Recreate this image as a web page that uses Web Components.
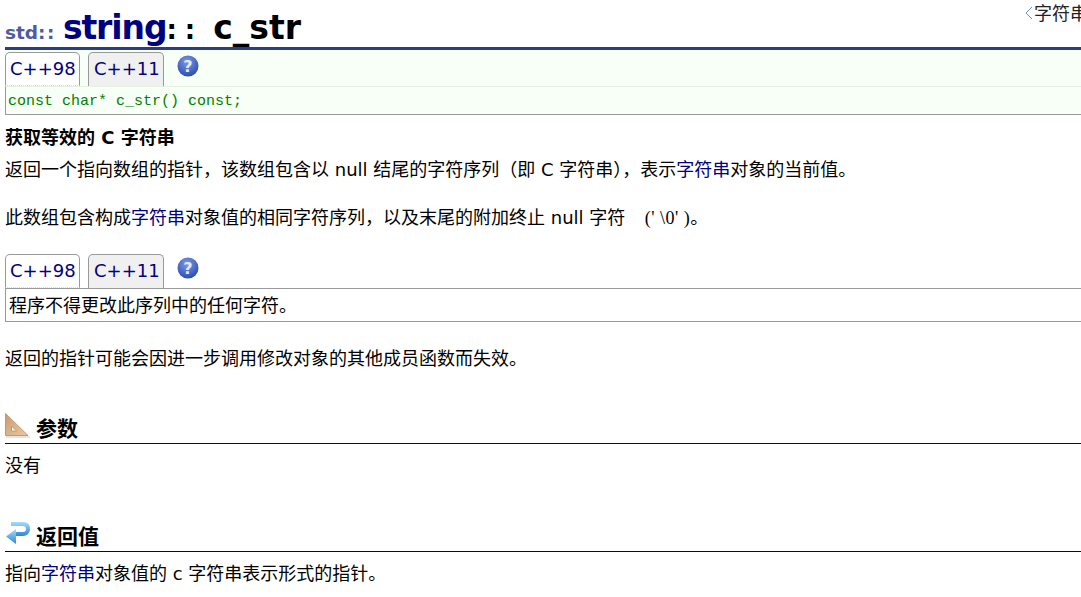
<!DOCTYPE html>
<html lang="zh">
<head>
<meta charset="utf-8">
<title>std::string::c_str</title>
<style>
	html, body { margin: 0; padding: 0; background: #fff; overflow: hidden; }
	body { font: 18px/24px "DejaVu Sans", "Noto Sans CJK SC", sans-serif; color: #000; }
</style>
</head>
<body>
<ref-page>
	<ref-title></ref-title>

	<version-box code>const char* c_str() const;</version-box>

	<ref-para bold style="--top: 11px">获取等效的 C 字符串</ref-para>
	<ref-para style="--top: 8px">返回一个指向数组的指针，该数组包含以 null 结尾的字符序列（即 C 字符串），表示<a>字符串</a>对象的当前值。</ref-para>
	<ref-para style="--top: 24px">此数组包含构成<a>字符串</a>对象值的相同字符序列，以及末尾的附加终止 null 字符 &nbsp;<span style="font-family:'Liberation Serif',serif;margin-left:8px;letter-spacing:.5px">(' \0' )</span>。</ref-para>

	<version-box style="--top: 22px">程序不得更改此序列中的任何字符。</version-box>

	<ref-para style="--top: 25px">返回的指针可能会因进一步调用修改对象的其他成员函数而失效。</ref-para>

	<ref-section icon="ruler" style="--top: 42px">参数</ref-section>
	<ref-para style="--top: 10px">没有</ref-para>

	<ref-section icon="return" style="--top: 43px">返回值</ref-section>
	<ref-para style="--top: 10px">指向<a>字符串</a>对象值的 c 字符串表示形式的指针。</ref-para>
</ref-page>

<script>
	const linkColor = '#000080';

	customElements.define('ref-page', class extends HTMLElement {
		constructor() {
			super();
			this.attachShadow({ mode: 'open' }).innerHTML = `
				<style>
					:host { display: block; height: 597px; padding-left: 5px; overflow: hidden; }
				</style>
				<slot></slot>
			`;
		}
	});

	customElements.define('ref-title', class extends HTMLElement {
		constructor() {
			super();
			this.attachShadow({ mode: 'open' }).innerHTML = `
				<style>
					:host { display: block; position: relative; height: 47px; border-bottom: 3px solid #2a3f80; }
					h1 { display: flex; align-items: baseline; margin: 0; padding-top: 10px; font: bold 33px/36px "DejaVu Sans", sans-serif; white-space: nowrap; }
					.ns { font-size: 18.5px; color: #4f5ba0; margin-right: 7px; }
					.ns b { letter-spacing: 1.5px; }
					.cls { color: #000080; letter-spacing: -1.1px; }
					.sep { letter-spacing: 8px; font-size: 26px; }
					.name { margin-left: 10px; }
					.back { position: absolute; top: 0; right: 0; width: 56px; overflow: hidden; white-space: nowrap; font: 18px/24px "Noto Sans CJK SC", sans-serif; color: #222; }
					.back svg { margin-right: 1px; }
				</style>
				<h1><span class="ns">std<b>::</b></span><span class="cls">string</span><span class="sep">::</span><span class="name">c_str</span></h1>
				<span class="back"><svg width="8" height="14" viewBox="0 0 8 14"><path d="M7 1 L1 7 L7 13" fill="none" stroke="#6a8cc0" stroke-width="1"/></svg>字符串</span>
			`;
		}
	});

	customElements.define('version-box', class extends HTMLElement {
		constructor() {
			super();
			const code = this.hasAttribute('code');
			this.attachShadow({ mode: 'open' }).innerHTML = `
				<style>
					:host { display: block; margin-top: var(--top, 0); background: ${code ? '#f8fff6' : '#fff'}; }
					.tabs { display: flex; align-items: flex-start; padding-top: 2px; height: 33px; }
					.tab { box-sizing: border-box; width: 76px; height: 34px; padding: 0 4px 0 5px; border: 1px solid #999; border-bottom: 0; border-radius: 5px 5px 0 0; font: 18px/31px "DejaVu Sans", sans-serif; color: #000080; background: #f0f0f0; margin-right: 8px; position: relative; z-index: 1; }
					.tab.on { background: #fff; width: 75px; padding-left: 4px; border-bottom: 1px dotted #ddd; }
					.help { margin: 3px 0 0 5px; }
					.body { box-sizing: border-box; height: ${code ? 29 : 34}px; border: 1px solid #999; border-right: 0; margin-top: 1px; padding: 0 3px; white-space: nowrap; line-height: ${code ? 27 : 34}px; }
					.code { font: 15px/29px "Liberation Mono", monospace; color: #008000; background: #f8fff6; border-top-color: #e6efe2; padding-left: 2px; }
				</style>
				<div class="tabs">
					<span class="tab on">C++98</span>
					<span class="tab">C++11</span>
					<svg class="help" width="24" height="24" viewBox="0 0 24 24">
						<defs>
							<radialGradient id="g" cx="0.45" cy="0.3" r="0.8">
								<stop offset="0" stop-color="#7d9be6"/>
								<stop offset="1" stop-color="#1f41a8"/>
							</radialGradient>
						</defs>
						<circle cx="11" cy="11" r="10.5" fill="url(#g)"/>
						<text x="11" y="17" text-anchor="middle" font-family="DejaVu Sans" font-weight="bold" font-size="16" fill="#e8e8e8">?</text>
					</svg>
				</div>
				<div class="body ${code ? 'code' : ''}"><slot></slot></div>
			`;
		}
	});

	customElements.define('ref-para', class extends HTMLElement {
		constructor() {
			super();
			this.attachShadow({ mode: 'open' }).innerHTML = `
				<style>
					:host { display: block; margin-top: var(--top, 0); white-space: nowrap; }
					:host([bold]) { font-weight: bold; }
					::slotted(a) { color: ${linkColor}; }
				</style>
				<slot></slot>
			`;
		}
	});

	const sectionIcons = {
		ruler: `<svg width="26" height="26" viewBox="0 0 26 26" style="margin-bottom:4px">
			<defs><linearGradient id="w" x1="0" y1="0" x2="1" y2="1"><stop offset="0" stop-color="#c99a6c"/><stop offset="1" stop-color="#eec9a0"/></linearGradient></defs>
			<path d="M0.5 0.5 L23 22.5 L0.5 22.5 Z M6.5 13 L6.5 18 L11.5 18 Z" fill="url(#w)" fill-rule="evenodd" stroke="#c39a70" stroke-width="1"/>
			<path d="M1 24 L25 24" stroke="#ddd" stroke-width="1.5"/>
		</svg>`,
		return: `<svg width="26" height="26" viewBox="0 0 26 26" style="margin-bottom:4px">
			<defs><linearGradient id="b" x1="0" y1="0" x2="0" y2="1"><stop offset="0" stop-color="#a6dcfa"/><stop offset="1" stop-color="#2b86d6"/></linearGradient></defs>
			<path d="M6 1 H18 C24 1 25 5 25 8 C25 12 22 15 18 15 H10 V11 H18 C20 11 21 10 21 8 C21 6 20 5 18 5 H6 Z" fill="url(#b)"/>
			<path d="M11 8 V23 L1 15.5 Z" fill="url(#b)"/>
		</svg>`
	};

	customElements.define('ref-section', class extends HTMLElement {
		constructor() {
			super();
			this.attachShadow({ mode: 'open' }).innerHTML = `
				<style>
					:host { display: flex; align-items: flex-end; gap: 5px; margin-top: var(--top, 0); height: 30px; border-bottom: 1px solid #000080; font-weight: bold; font-size: 21px; line-height: 27px; }
					svg { display: block; }
				</style>
				${sectionIcons[this.getAttribute('icon')]}
				<slot></slot>
			`;
		}
	});
</script>
</body>
</html>
